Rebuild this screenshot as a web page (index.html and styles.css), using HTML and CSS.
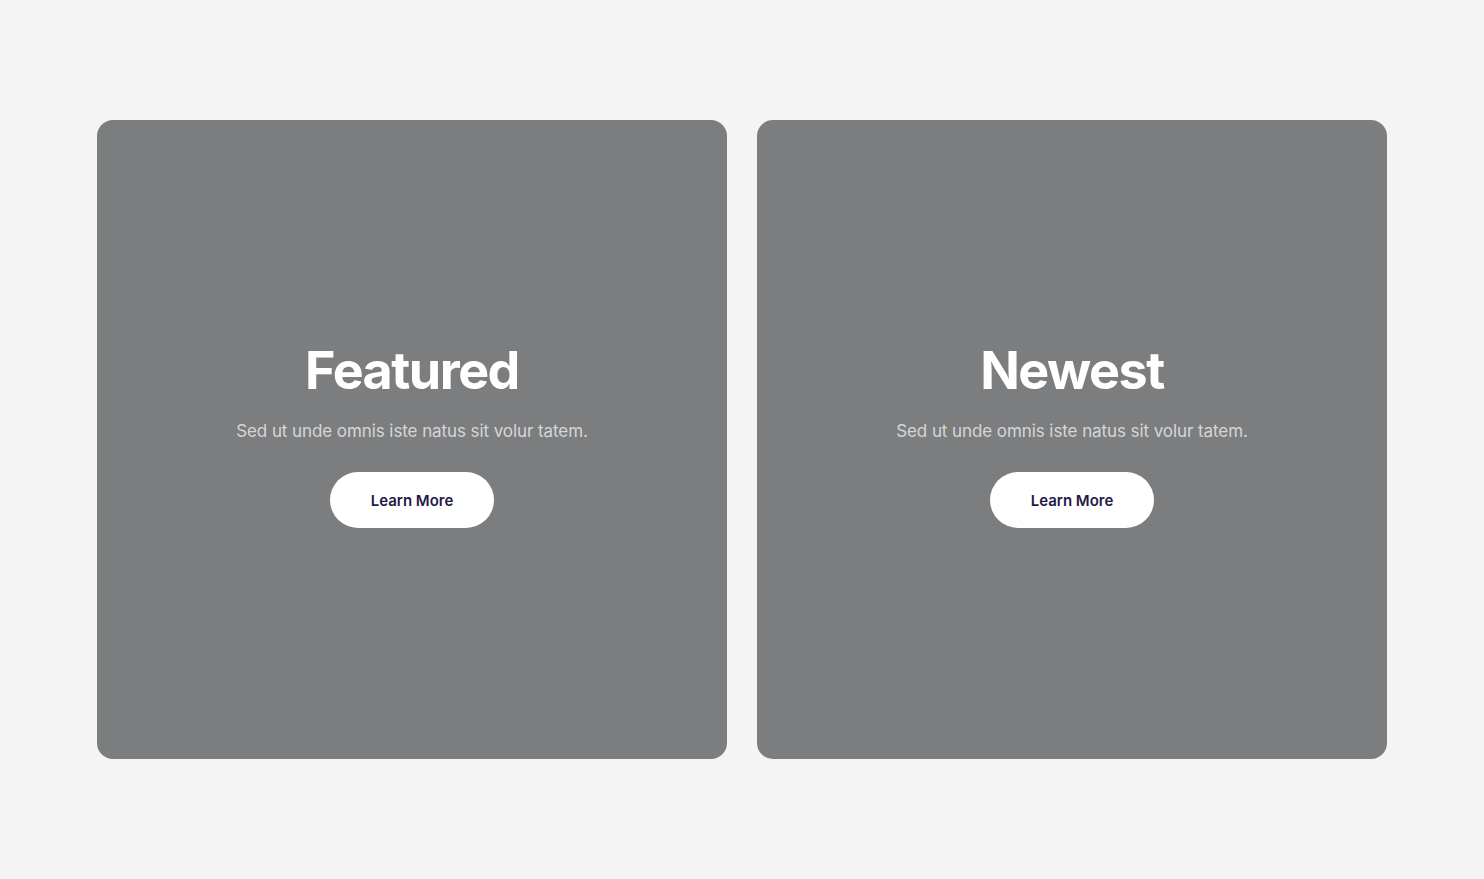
FILE: index.html
```html
<!DOCTYPE html>
<html lang="en">
<head>
<meta charset="utf-8">
<title>Cards</title>
<link rel="stylesheet" href="styles.css">
</head>
<body>
<main class="page">
  <section class="cards">
    <article class="card">
      <h2 class="card-title">Featured</h2>
      <p class="card-text">Sed ut unde omnis iste natus sit volur tatem.</p>
      <a class="card-btn" href="#">Learn More</a>
    </article>
    <article class="card">
      <h2 class="card-title">Newest</h2>
      <p class="card-text">Sed ut unde omnis iste natus sit volur tatem.</p>
      <a class="card-btn" href="#">Learn More</a>
    </article>
  </section>
</main>
</body>
</html>
```
FILE: styles.css
```css
html, body {
  margin: 0;
  padding: 0;
  background: #f4f4f4;
  font-family: Inter, "Noto Sans", sans-serif;
}
.page {
  padding: 120px 97px;
}
.cards {
  display: grid;
  grid-template-columns: 1fr 1fr;
  gap: 30px;
}
.card {
  box-sizing: border-box;
  height: 639px;
  padding-bottom: 10px;
  background: #7c7d7f;
  border-radius: 16px;
  display: flex;
  flex-direction: column;
  align-items: center;
  justify-content: center;
  text-align: center;
}
.card-title {
  margin: 0;
  color: #ffffff;
  font-size: 52px;
  font-weight: 700;
  letter-spacing: -1.5px;
  line-height: 60px;
}
.card-text {
  margin: 18px 0 0;
  color: #d6d6d6;
  font-size: 17px;
  line-height: 24px;
  letter-spacing: -0.08px;
}
.card-btn {
  margin-top: 29px;
  width: 164px;
  height: 56px;
  border-radius: 28px;
  background: #ffffff;
  color: #1f1a48;
  font-size: 15px;
  font-weight: 600;
  text-decoration: none;
  display: flex;
  align-items: center;
  justify-content: center;
}
```
